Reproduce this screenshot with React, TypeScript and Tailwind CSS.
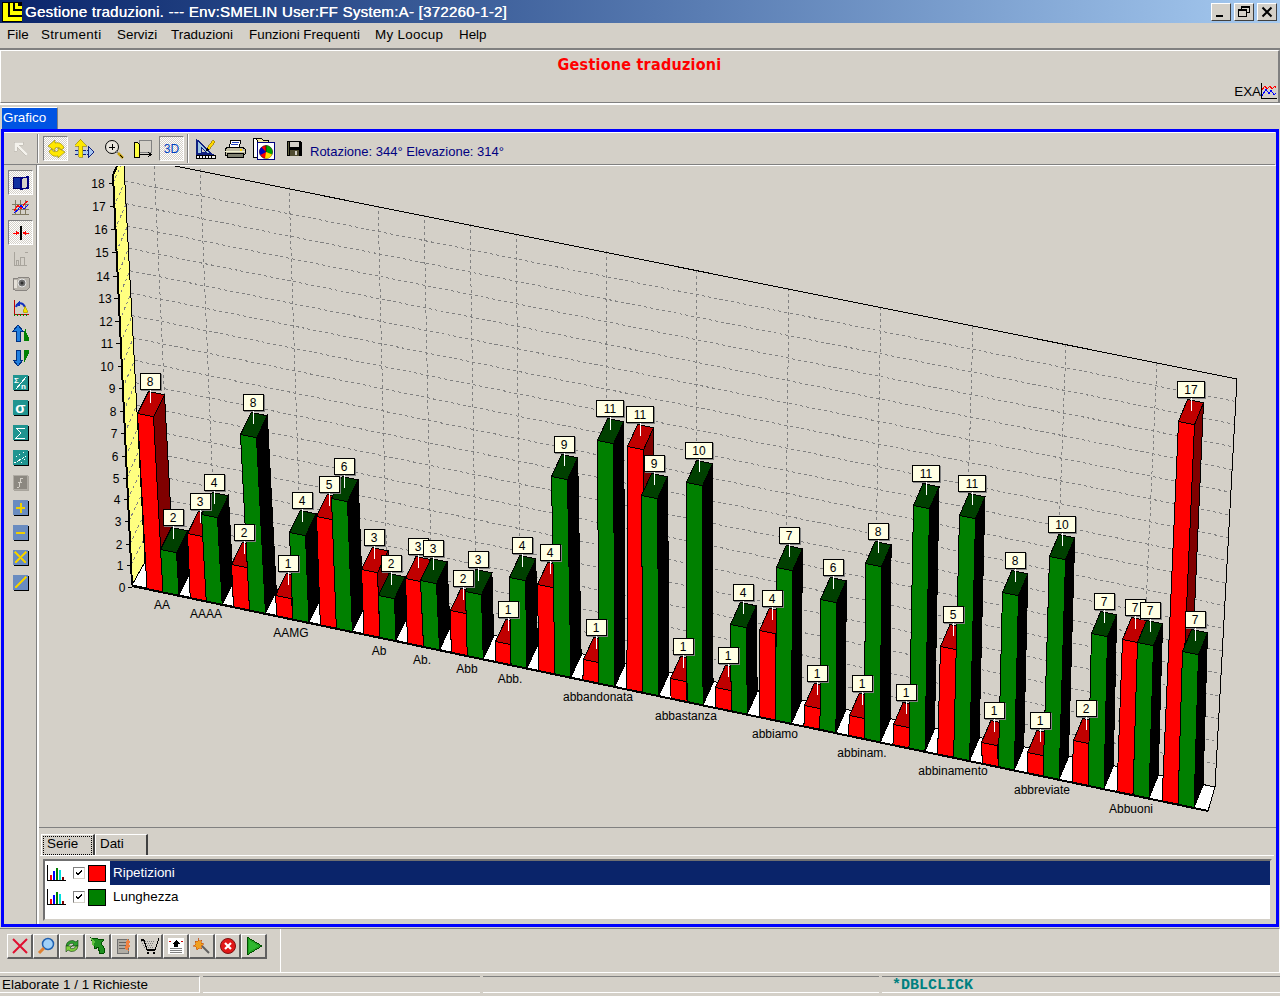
import React from "react";

const DATA: [number, number][] = [[8,2],[3,4],[2,8],[1,4],[5,6],[3,2],[3,3],[2,3],[1,4],[4,9],[1,11],[11,9],[1,10],[1,4],[4,7],[1,6],[1,8],[1,11],[5,11],[1,8],[1,10],[2,7],[7,7],[17,7]];
const POS: number[][] = [[150,381,173,517],[200,501,214,482],[244,532,253,402],[288,563,302,500],[329,484,344,466],[374,537,391,563],[418,546,433,548],[463,578,478,559],[508,609,522,545],[550,552,564,444],[596,627,610,408],[640,414,654,463],[683,646,699,450],[728,655,743,592],[772,598,789,535],[817,673,833,567],[862,683,878,531],[906,692,926,473],[953,614,972,483],[994,710,1015,560],[1040,720,1062,524],[1086,708,1104,601],[1135,607,1150,610],[1191,389,1195,619]];
const YTICKS: [string, number, number][] = [["18",98,183],["17",99,206],["16",101,229],["15",102,252],["14",103,276],["13",105,298],["12",106,321],["11",107,343],["10",107,366],["9",112,388],["8",113,411],["7",114,433],["6",115,456],["5",116,478],["4",117,499],["3",118,521],["2",119,544],["1",120,565],["0",122,587]];
const CATS: [string, number, number][] = [["AA",162,604],["AAAA",206,613],["AAMG",291,632],["Ab",379,650],["Ab.",422,659],["Abb",467,668],["Abb.",510,678],["abbandonata",598,696],["abbastanza",686,715],["abbiamo",775,733],["abbinam.",862,752],["abbinamento",953,770],["abbreviate",1042,789],["Abbuoni",1131,808]];
const VGRID = [154,200,289,378,424,470,516,606,697,789,881,973,1066,1157];

const pts = (a: number[][]) => a.map((p) => p.join(",")).join(" ");

function Bar({ i, s, lx, ly }: { i: number; s: number; lx: number; ly: number }) {
  const bx = 147 + 43.17 * i + 0.0418 * i * i + (s ? 16 : 0);
  const by = 585.5 + 0.209 * (bx - 132);
  const tx = lx - 12.5;
  const ty = ly + 32.5;
  const dx = 11 - (2 * i) / 23;
  const dy = -22;
  const w = 16;
  const h = 3.3;
  const front = s ? "#008000" : "#ff0000";
  const top = s ? "#004000" : "#c00000";
  const side = s ? "#000000" : "#800000";
  return (
    <g stroke="#000" strokeWidth={1}>
      <polygon fill={side} points={pts([[tx + w, ty + h], [tx + w + dx, ty + h + dy], [bx + w + dx, by + h + dy], [bx + w, by + h]])} />
      <polygon fill={top} points={pts([[tx, ty], [tx + w, ty + h], [tx + w + dx, ty + h + dy], [tx + dx, ty + dy]])} />
      <polygon fill={front} points={pts([[tx, ty], [tx + w, ty + h], [bx + w, by + h], [bx, by]])} />
    </g>
  );
}

function ValueLabel({ v, lx, ly }: { v: number; lx: number; ly: number }) {
  const w = v >= 10 ? 28 : 21;
  const x = Math.round(lx - w / 2);
  const y = Math.round(ly - 8.5);
  return (
    <g>
      <rect x={x + 1} y={y + 1} width={w} height={17} fill="#808080" />
      <rect x={x + 0.5} y={y + 0.5} width={w - 1} height={16} fill="#ffffe4" stroke="#000" />
      <line x1={Math.round(lx) + 0.5} y1={y + 17} x2={Math.round(lx) + 0.5} y2={y + 30} stroke="#fff" />
      <text x={lx} y={y + 13} textAnchor="middle" fontSize={12} fill="#000" style={{ fontFamily: "'Liberation Sans'" }}>{v}</text>
    </g>
  );
}

function Chart() {
  const hlines = [];
  for (let v = 1; v <= 17; v++) {
    hlines.push(<line key={v} x1={145 - (v / 18) * 21} y1={562 - 22.4 * v} x2={1215 + (v / 18) * 22} y2={787 - 22.67 * v} stroke="#808080" strokeDasharray="3 3" />);
  }
  const vlines = VGRID.map((x) => {
    const yt = 379 - 0.2025 * (1237 - x);
    const L = (650 - x) * 0.00009;
    let xb = x;
    for (let k = 0; k < 3; k++) xb = x + L * (562 + 0.21 * (xb - 145) - yt);
    const yb = 562 + 0.21 * (xb - 145);
    return <line key={x} x1={x} y1={yt} x2={xb} y2={yb} stroke="#808080" strokeDasharray="3 3" />;
  });
  return (
    <svg width={1237} height={661} viewBox="39 166 1237 661" shapeRendering="crispEdges" className="block">
      {hlines}
      {vlines}
      <line x1={150} y1={161} x2={1237} y2={379} stroke="#000" />
      <line x1={1237} y1={379} x2={1215} y2={787} stroke="#000" />
      <polygon points="117,166 124,166 145,562 132,585 113,175" fill="#ffff80" />
      {YTICKS.map(([, , y], k) => {
        const v = 18 - k;
        const fx = 132 - (585 - y) * 0.0476;
        return (
          <g key={k}>
            <line x1={fx - 4} y1={y} x2={fx} y2={y} stroke="#000" />
            <line x1={fx} y1={y} x2={145 - (v / 18) * 21} y2={562 - 22.4 * v} stroke="#808080" strokeDasharray="3 3" />
          </g>
        );
      })}
      <polyline points="117,166 113,175 132,585" fill="none" stroke="#000" strokeWidth={2} />
      <line x1={124} y1={166} x2={145} y2={562} stroke="#000" />
      <polygon points="132,585 1208,811 1215,787 145,562" fill="#fff" stroke="#000" />
      <line x1={132} y1={586} x2={1208} y2={811} stroke="#000" strokeWidth={2} />
      {DATA.map((_, i) => (
        <g key={i}>
          <Bar i={i} s={0} lx={POS[i][0]} ly={POS[i][1]} />
          <Bar i={i} s={1} lx={POS[i][2]} ly={POS[i][3]} />
        </g>
      ))}
      {DATA.map(([r, g], i) => (
        <g key={i}>
          <ValueLabel v={r} lx={POS[i][0]} ly={POS[i][1]} />
          <ValueLabel v={g} lx={POS[i][2]} ly={POS[i][3]} />
        </g>
      ))}
      <g shapeRendering="auto">
        {YTICKS.map(([t, x, y]) => (
          <text key={t} x={x} y={y + 4.5} textAnchor="middle" fontSize={12} fill="#000" style={{ fontFamily: "'Liberation Sans'" }}>{t}</text>
        ))}
        {CATS.map(([t, x, y]) => (
          <text key={t} x={x} y={y + 4.5} textAnchor="middle" fontSize={12} fill="#000" style={{ fontFamily: "'Liberation Sans'" }}>{t}</text>
        ))}
      </g>
    </svg>
  );
}

type IconProps = { children: React.ReactNode; s?: number; vb?: number };
function Ico({ children, s = 20, vb = 20 }: IconProps) {
  return <svg width={s} height={s} viewBox={`0 0 ${vb} ${vb}`} shapeRendering="crispEdges" className="block">{children}</svg>;
}

function TitleLogo() {
  return (
    <svg width={20} height={20} viewBox="0 0 20 20" shapeRendering="crispEdges" className="block ml-[2px]">
      <rect width={20} height={20} fill="#000" />
      <path d="M1 1h5v14h14v4H1z" fill="#ffff00" />
      <path d="M8 1h3v8h9v4H8z" fill="#ffff00" />
      <path d="M13 1h3v3h4v3h-7z" fill="#ffff00" />
    </svg>
  );
}

function WinBtn({ children }: { children: React.ReactNode }) {
  return (
    <div className="w-[20px] h-[18px] bg-[#d4d0c8] border border-t-white border-l-white border-r-[#404040] border-b-[#404040] flex items-center justify-center">
      {children}
    </div>
  );
}

function TitleBar() {
  return (
    <div className="h-[23px] flex items-center bg-gradient-to-r from-[#0a246a] to-[#a6caf0] shrink-0">
      <TitleLogo />
      <span className="ml-[3px] text-white text-[15px] leading-[23px] font-['Liberation_Sans'] whitespace-nowrap tracking-[0.28px] [text-shadow:0.3px_0_0_#fff]">Gestione traduzioni. --- Env:SMELIN User:FF System:A- [372260-1-2]</span>
      <div className="ml-auto mr-[3px] flex gap-[3px]">
        <WinBtn>
          <svg width={12} height={12} viewBox="0 0 12 12" shapeRendering="crispEdges"><rect x={1} y={9} width={7} height={2} fill="#000" /></svg>
        </WinBtn>
        <WinBtn>
          <svg width={12} height={12} viewBox="0 0 12 12" shapeRendering="crispEdges"><path d="M3.5 3.5V.5h8v6h-3M.5 3.5h8v7h-8z M.5 4.5h8 M3.5 1.5h8" fill="none" stroke="#000" /></svg>
        </WinBtn>
        <WinBtn>
          <svg width={12} height={12} viewBox="0 0 12 12"><path d="M1.5 1.5l9 9M10.5 1.5l-9 9" stroke="#000" strokeWidth={2} /></svg>
        </WinBtn>
      </div>
    </div>
  );
}

function Menu() {
  const items: [string, string][] = [["File", "w-[19px]"], ["Strumenti", "w-[61px] tracking-[0.35px]"], ["Servizi", "w-[39px]"], ["Traduzioni", "w-[63px]"], ["Funzioni Frequenti", "w-[111px]"], ["My Loocup", "w-[69px] tracking-[0.3px]"], ["Help", "w-[26px]"]];
  return (
    <div className="h-[24px] flex items-center gap-[15px] pl-[7px] text-[13.4px] text-black shrink-0">
      {items.map(([t, w]) => <span key={t} className={`${w} whitespace-nowrap`}>{t}</span>)}
    </div>
  );
}

function ExaIcon() {
  return (
    <svg width={16} height={17} viewBox="0 0 16 17" shapeRendering="crispEdges" className="block">
      <path d="M.5 0v15.5H15.5" fill="none" stroke="#000" />
      <polyline points="1,7 4,3 6,6 9,3 11,6 14,3 15,5" fill="none" stroke="#ff0000" />
      <polyline points="1,13 5,6 8,11 10,7 13,12 15,10" fill="none" stroke="#0000ff" />
    </svg>
  );
}

function Header() {
  return (
    <div className="mt-[1px] h-[57px] border-t-2 border-t-[#808080] border-b-2 border-b-white shrink-0">
      <div className="h-[53px] border-t border-l border-t-white border-l-white border-b border-b-[#808080] border-r-2 border-r-[#808080] flex flex-col">
        <div className="text-center text-[#ff0000] font-bold text-[16px] leading-[18px] pt-[5px] h-[27px] tracking-[0.25px] [font-family:'DejaVu_Sans','Liberation_Sans',sans-serif] scale-x-[0.9]">Gestione traduzioni</div>
        <div className="flex justify-end items-end mt-[5px] pr-[1px]">
          <span className="text-[13.4px] leading-[16px] text-black">EXA</span>
          <ExaIcon />
        </div>
      </div>
    </div>
  );
}

function ArrowUL() {
  return <Ico s={18} vb={18}><path d="M2 2h9v3H7l9 9-2 2-9-9v4H2z" fill="#f4f2ec" stroke="#b8b4ac" strokeWidth={0.5} /></Ico>;
}
function Rotate() {
  return (
    <Ico>
      <g stroke="#8a7a00" strokeWidth={0.6} fill="#ffe800" shapeRendering="auto">
        <path d="M18 9C17 5 13 3 9 4L9 1 2 7l7 5 0-3C12 8 15 9 15 11z" />
        <path d="M3 12c1 4 5 6 9 5l0 2 7-6-7-4 0 3C9 13 6 13 6 10z" />
      </g>
    </Ico>
  );
}
function MoveAxes() {
  return (
    <Ico>
      <path d="M0.5 11.5h13v3h-13z" fill="#a8c8f0" />
      <path d="M0 11h14M0 15h14" stroke="#102080" strokeDasharray="3 1" />
      <path d="M13 7l6 6-6 6z" fill="#a8c8f0" stroke="#102080" />
      <path d="M5.5 0l6 7H7.5v11h-4V7H-.5z" fill="#ffe800" stroke="#8a7a00" strokeWidth={0.6} />
    </Ico>
  );
}
function ZoomPlus() {
  return (
    <Ico>
      <circle cx={8} cy={8} r={6.5} fill="#e8e4dc" stroke="#000" shapeRendering="auto" />
      <path d="M5 8h6M8 5v6" stroke="#000" />
      <path d="M12 12l2 2" stroke="#808080" strokeWidth={2} />
      <path d="M14 14l5 5" stroke="#c8a000" strokeWidth={2.5} shapeRendering="auto" />
      <path d="M16 16l3 3" stroke="#000" strokeWidth={1} />
    </Ico>
  );
}
function YellowBox() {
  return (
    <Ico>
      <rect x={6} y={1} width={12} height={12} fill="#d4d0c8" stroke="#808080" />
      <path d="M1.5 3.5h3l2 2v13h-5z" fill="#ffff40" stroke="#000" />
      <path d="M6 15.5h12M15 13l3 2.5-3 2.5" fill="none" stroke="#000" />
    </Ico>
  );
}
function Ruler() {
  return (
    <Ico s={22} vb={22}>
      <path d="M2 2l15 14H2z" fill="#a0c8e0" stroke="#102080" strokeWidth={1.4} />
      <path d="M6 9l5 5H6z" fill="#d4d0c8" stroke="#102080" />
      <path d="M1 17h19v3H1z" fill="#f0f0f0" stroke="#000" />
      <path d="M4 18v2M7 18v2M10 18v2M13 18v2M16 18v2" stroke="#000" />
      <path d="M12 10l6-8 2 2-6 8z" fill="#ffd800" stroke="#806000" strokeWidth={0.6} />
      <path d="M12 10l-1 3 3-1z" fill="#000" />
    </Ico>
  );
}
function Printer() {
  return (
    <Ico s={22} vb={22}>
      <path d="M7 2h10l-2 8H5z" fill="#fff" stroke="#000" />
      <path d="M8 4h7M7 6h7" stroke="#2040c0" />
      <path d="M1 11l3-2h14l3 2v5l-2 2H3l-2-1z" fill="#c0bca4" stroke="#000" />
      <path d="M1 13h20" stroke="#f0f0d0" />
      <rect x={3} y={15} width={16} height={4} fill="#808070" stroke="#000" />
      <path d="M16 12h2" stroke="#ffd000" strokeWidth={2} />
    </Ico>
  );
}
function PieDoc() {
  return (
    <svg width={22} height={24} viewBox="0 0 22 24" className="block" shapeRendering="crispEdges">
      <path d="M0.5 1.5h4v19h-4z" fill="#fff" stroke="#000" />
      <path d="M3.5 1.5h5l2 2h5v3h-10z" fill="#f0e8a0" stroke="#000" />
      <rect x={4.5} y={5.5} width={17} height={17} fill="#fff" stroke="#000080" />
      <g shapeRendering="auto">
        <circle cx={13} cy={15} r={6.5} fill="#ff0000" stroke="#000" strokeWidth={0.6} />
        <path d="M13 15V8.5a6.5 6.5 0 0 1 6 9z" fill="#00a000" />
        <path d="M13 15L7.5 18a6.5 6.5 0 0 1 1-8z" fill="#0000c0" />
        <path d="M13 15l6 2.5a6.5 6.5 0 0 1-7 4z" fill="#ffe000" />
        <path d="M13 15V8.5" stroke="#000" strokeWidth={0.6} />
      </g>
    </svg>
  );
}
function Floppy() {
  return (
    <Ico s={15} vb={15}>
      <path d="M0 0h13l2 2v13H0z" fill="#000" />
      <rect x={3} y={1} width={9} height={5} fill="#d4d0c8" />
      <rect x={3} y={9} width={9} height={6} fill="#504c30" />
      <rect x={8} y={10} width={2} height={4} fill="#d4d0c8" />
      <rect x={1} y={1} width={1} height={13} fill="#606040" />
    </Ico>
  );
}

const DITHER = "bg-[repeating-conic-gradient(#ffffff_0_25%,#d4d0c8_0_50%)] bg-[length:2px_2px]";

function Pressed({ children }: { children: React.ReactNode }) {
  return (
    <div className={`w-[25px] h-[25px] border border-t-[#808080] border-l-[#808080] border-r-white border-b-white flex items-center justify-center ${DITHER}`}>
      {children}
    </div>
  );
}
function Plain({ children }: { children: React.ReactNode }) {
  return <div className="w-[25px] h-[25px] flex items-center justify-center">{children}</div>;
}
function Sep() {
  return <div className="w-[2px] h-[29px] border-l border-l-[#808080] border-r border-r-white" />;
}

function TopToolbar() {
  return (
    <div className="h-[33px] border-t border-t-white border-b border-b-[#808080] flex items-center shrink-0 mr-[1px]">
      <div className="w-[33px] flex justify-center pl-[1px]"><ArrowUL /></div>
      <Sep />
      <div className="ml-[4px] flex gap-[4px]">
        <Pressed><Rotate /></Pressed>
        <Plain><MoveAxes /></Plain>
        <Plain><ZoomPlus /></Plain>
        <Plain><YellowBox /></Plain>
        <Pressed><span className="text-[12px] text-[#0040c0] leading-none">3D</span></Pressed>
      </div>
      <div className="ml-[3px]"><Sep /></div>
      <div className="ml-[4px] flex gap-[4px]">
        <Plain><Ruler /></Plain>
        <Plain><Printer /></Plain>
        <Plain><PieDoc /></Plain>
        <div className="ml-[2px]"><Plain><Floppy /></Plain></div>
      </div>
      <span className="ml-[3px] mt-[7px] text-[13px] text-[#000080] whitespace-nowrap">Rotazione: 344° Elevazione: 314°</span>
    </div>
  );
}

function Tile({ c, children, dim }: { c: string; children: React.ReactNode; dim?: boolean }) {
  return (
    <svg width={16} height={16} viewBox="0 0 16 16" shapeRendering="crispEdges" className="block">
      <rect x={1} y={1} width={15} height={15} fill={dim ? "#a8a49c" : "#000"} />
      <rect x={0} y={0} width={15} height={15} fill={c} />
      {children}
    </svg>
  );
}
const W = "#ffffff";
const Y = "#f0d000";
function LeftIcon({ n }: { n: number }) {
  switch (n) {
    case 0:
      return <Ico s={18} vb={18}><path d="M1 3l7 1v11l-7-1z" fill="#1030a0" stroke="#000060" /><path d="M9 4l7-1v11l-7 1z" fill="#d4d0c8" stroke="#000080" strokeWidth={1.6} /></Ico>;
    case 1:
      return <Ico s={18} vb={18}><path d="M3 1v15M0 15h17M0 5h17M0 10h17M8 1v15M13 1v15" stroke="#807860" /><polyline points="2,12 6,6 9,10 13,4 16,2" fill="none" stroke="#ff0000" /><polyline points="2,14 6,11 9,6 12,10 16,6" fill="none" stroke="#0000ff" /></Ico>;
    case 2:
      return <Ico s={18} vb={18}><path d="M9 2v14" stroke="#000" strokeWidth={1.5} /><path d="M1 9h6M11 9h6" stroke="#ff0000" /><path d="M4 7l4 2-4 2zM14 7l-4 2 4 2z" fill="#ff0000" /></Ico>;
    case 3:
      return <Ico s={18} vb={18}><path d="M2 3v13h13M13 3h3M8 8h4v8H8zM4 11h2v5H4z" fill="none" stroke="#a8a49c" /></Ico>;
    case 4:
      return <Ico s={18} vb={18}><path d="M1 5l2-1h3l1-1h8l2 1v10l-2 2H3l-2-1z" fill="#b8b4ac" stroke="#888480" /><circle cx={10} cy={9} r={4} fill="#707070" stroke="#e8e8e8" shapeRendering="auto" /><rect x={2} y={6} width={3} height={8} fill="#e4e0d8" /><circle cx={10} cy={9} r={1.5} fill="#303030" shapeRendering="auto" /></Ico>;
    case 5:
      return <Ico s={18} vb={18}><path d="M2 1v14h15" fill="none" stroke="#c00000" /><path d="M2 16h15" stroke="#008000" strokeDasharray="1 2" strokeWidth={2} /><path d="M4 8c1-4 6-6 9 0" fill="none" stroke="#1030c0" strokeWidth={2} shapeRendering="auto" /><path d="M8 1v6l-5-1z" fill="#1030c0" /><path d="M13 7l3 6-3 1-2-1z" fill="#f0e000" stroke="#908000" strokeWidth={0.5} /></Ico>;
    case 6:
      return <Ico s={18} vb={18}><path d="M6 1l5 6H8v10H4V7H1z" fill="#2080e0" stroke="#003080" /><path d="M12 8h2M12 10h3M12 12h4M12 14h5M12 16h5M13 6h1" stroke="#008000" strokeWidth={1.5} /></Ico>;
    case 7:
      return <Ico s={18} vb={18}><path d="M6 17l5-6H8V1H4v10H1z" fill="#2080e0" stroke="#003080" /><path d="M12 2h5M12 4h5M12 6h4M12 8h3M12 10h2M12 12h1" stroke="#008000" strokeWidth={1.5} /></Ico>;
    case 8:
      return <Tile c="#1f9490"><text x={1} y={8} fontSize={8} fill={W} fontWeight={700} style={{ fontFamily: "'Liberation Sans'" }}>Σ</text><path d="M13 2L3 14" stroke={W} /><text x={8} y={14} fontSize={8} fill={W} fontWeight={700} style={{ fontFamily: "'Liberation Sans'" }}>n</text></Tile>;
    case 9:
      return <Tile c="#1f9490"><text x={7.5} y={13} fontSize={15} textAnchor="middle" fill={W} fontWeight={700} style={{ fontFamily: "'Liberation Sans'" }}>σ</text></Tile>;
    case 10:
      return <Tile c="#1f9490"><path d="M12 3H3l5 5-5 5h9" fill="none" stroke={W} /></Tile>;
    case 11:
      return <Tile c="#1f9490"><path d="M1 13l13-7" stroke={W} strokeDasharray="2 1" /><path d="M3 6h1M6 4h1M10 2h1M5 10h1M11 9h1M8 12h1" stroke={W} /></Tile>;
    case 12:
      return <Tile c="#8c8880" dim><rect x={0.5} y={0.5} width={14} height={14} fill="#8c8880" stroke="#b0aca4" /><path d="M10 3H8L6 12H4M5 7h4" fill="none" stroke="#d4d0c8" /></Tile>;
    case 13:
      return <Tile c="#6a8cc0"><path d="M3 7h9v2H3zM6.5 3h2v10h-2z" fill={Y} /></Tile>;
    case 14:
      return <Tile c="#6a8cc0"><path d="M3 6.5h9v2H3z" fill={Y} /></Tile>;
    case 15:
      return <Tile c="#6a8cc0"><path d="M2 2l11 11M13 2L2 13" stroke={Y} strokeWidth={1.5} /></Tile>;
    default:
      return <Tile c="#6a8cc0"><path d="M2 13L13 2" stroke={Y} strokeWidth={1.5} /></Tile>;
  }
}

function LeftToolbar() {
  const idx = Array.from({ length: 17 }, (_, i) => i);
  return (
    <div className="w-[33px] border-r border-r-[#808080] pt-[5px] pl-[4px] flex flex-col shrink-0">
      {idx.map((n) =>
        n === 0 || n === 2 ? (
          <Pressed key={n}><LeftIcon n={n} /></Pressed>
        ) : (
          <Plain key={n}><LeftIcon n={n} /></Plain>
        )
      )}
    </div>
  );
}

function MiniBars() {
  return (
    <svg width={19} height={17} viewBox="0 0 19 17" shapeRendering="crispEdges" className="block">
      <path d="M.5 0v15.5H18.5" fill="none" stroke="#000" />
      <rect x={3} y={10} width={2} height={5} fill="#ff0000" />
      <rect x={6} y={6} width={2} height={9} fill="#0000ff" />
      <rect x={9} y={3} width={2} height={12} fill="#008000" />
      <rect x={12} y={5} width={2} height={10} fill="#00e0e0" />
      <rect x={15} y={12} width={2} height={3} fill="#800000" />
    </svg>
  );
}

function Check() {
  return (
    <div className="w-[12px] h-[12px] bg-white border border-t-[#808080] border-l-[#808080] border-r-[#d4d0c8] border-b-[#d4d0c8] flex items-center justify-center">
      <svg width={10} height={10} viewBox="0 0 10 10" shapeRendering="crispEdges"><path d="M2 4l2 2 4-4M2 5l2 2 4-4" fill="none" stroke="#000" strokeWidth={1.2} /></svg>
    </div>
  );
}

function SeriesRow({ color, name, sel }: { color: string; name: string; sel?: boolean }) {
  return (
    <div className="h-[24px] flex items-center">
      <div className="w-[65px] flex items-center pl-[2px]">
        <MiniBars />
        <div className="ml-[7px]"><Check /></div>
        <div className="ml-[3px] w-[18px] h-[17px] border border-black" style={{ backgroundColor: color }} />
      </div>
      <div className={`flex-1 h-[24px] flex items-center pl-[3px] text-[13.4px] leading-none ${sel ? "bg-[#0a246a] text-white" : "text-black"}`}>{name}</div>
    </div>
  );
}

function BottomPanel() {
  return (
    <div className="h-[97px] border-t border-t-[#808080] shrink-0 pl-[1px] pr-[2px]">
      <div className="flex items-end h-[27px] pt-[5px] pl-[1px]">
        <div className="w-[54px] h-[21px] bg-[#d4d0c8] border-t border-l border-t-white border-l-white border-r-2 border-r-[#404040] p-[1px] mt-[-1px]">
          <div className="border border-dotted border-black h-[19px] leading-[13px] text-[13.4px] pl-[3px]">Serie</div>
        </div>
        <div className="w-[53px] h-[21px] border-t border-l border-t-white border-l-white border-r-2 border-r-[#404040] text-[13.4px] leading-[18px] pl-[4px]">Dati</div>
      </div>
      <div className="border-t border-t-white h-[68px] pt-[3px] pl-[3px] pr-[2px]">
        <div className="h-[62px] bg-white border-t-2 border-l-2 border-t-[#707070] border-l-[#707070] border-b-2 border-r-2 border-b-[#d4d0c8] border-r-[#d4d0c8]">
          <SeriesRow color="#ff0000" name="Ripetizioni" sel />
          <SeriesRow color="#008000" name="Lunghezza" />
        </div>
      </div>
    </div>
  );
}

function Frame() {
  return (
    <div className="mx-[1px] h-[798px] border-[3px] border-[#0000ff] flex flex-col shrink-0">
      <TopToolbar />
      <div className="flex flex-1 min-h-0">
        <LeftToolbar />
        <div className="flex-1 min-w-0 flex flex-col border-l-2 border-l-white">
          <div className="h-[662px] border-t border-t-white overflow-hidden shrink-0"><Chart /></div>
          <BottomPanel />
        </div>
      </div>
    </div>
  );
}

function BtnIcon({ n }: { n: number }) {
  switch (n) {
    case 0:
      return <Ico s={18} vb={18}><path d="M2 2l14 14M16 2L2 16" stroke="#e01030" strokeWidth={2} shapeRendering="auto" /></Ico>;
    case 1:
      return <Ico s={18} vb={18}><g shapeRendering="auto"><circle cx={11} cy={7} r={5.5} fill="#a0d0f8" stroke="#2060b0" strokeWidth={1.5} /><path d="M7 11l-5 5" stroke="#e08030" strokeWidth={3} /></g></Ico>;
    case 2:
      return <Ico s={18} vb={18}><g shapeRendering="auto"><path d="M3 9a6 6 0 0 1 10-4l2-2v6h-6l2-2a4 4 0 0 0-6 2z" fill="#30a030" stroke="#104010" strokeWidth={0.6} /><path d="M15 9a6 6 0 0 1-10 4l-2 2V9h6l-2 2a4 4 0 0 0 6-2z" fill="#80d040" stroke="#104010" strokeWidth={0.6} /></g></Ico>;
    case 3:
      return <Ico s={18} vb={18}><path d="M2 1l13 2-3 3 3 5v5l-4 1-2-7-3 2z" fill="#209020" stroke="#005000" /><path d="M2 1l4 4-2 5z" fill="#60c040" /></Ico>;
    case 4:
      return <Ico s={18} vb={18}><rect x={2} y={2} width={11} height={14} fill="#b0aca4" stroke="#707070" /><path d="M4 5h7M4 8h7M4 11h7" stroke="#686460" /><path d="M12 2l3 3-2 2 3 2-3 2 1 3-4-2z" fill="#f08040" /></Ico>;
    case 5:
      return <Ico s={20} vb={20}><path d="M1 5h13M2 7h11M3 9h10M4 11h9" stroke="#808080" strokeDasharray="1 1" /><path d="M1 4h3l3 10h8l4-12" fill="none" stroke="#000" strokeWidth={1.2} /><circle cx={8} cy={17} r={1.5} fill="#000" /><circle cx={14} cy={17} r={1.5} fill="#000" /></Ico>;
    case 6:
      return <Ico s={18} vb={18}><rect x={1} y={1} width={16} height={16} fill="#fff" /><path d="M9 3l4 4h-2v3H7V7H5z" fill="#000" /><path d="M2 4h2M14 4h2" stroke="#d00000" /><path d="M3 11h12M3 13h12M3 15h12" stroke="#808080" /></Ico>;
    case 7:
      return <Ico s={18} vb={18}><path d="M9 9l7 7" stroke="#606060" strokeWidth={2} shapeRendering="auto" /><path d="M5 1l1 3 3-1-1 3 3 1-3 2 1 3-3-1-2 2-1-3-3-1 3-2-1-3 3 0z" fill="#f0a020" stroke="#c04000" strokeWidth={0.5} /></Ico>;
    case 8:
      return <Ico s={18} vb={18}><g shapeRendering="auto"><circle cx={9} cy={9} r={7.5} fill="#e01818" stroke="#801010" /><path d="M6 6l6 6M12 6l-6 6" stroke="#fff" strokeWidth={2.2} /></g></Ico>;
    default:
      return <Ico s={20} vb={20}><path d="M3 1l15 9-15 9z" fill="#20a020" stroke="#005000" /><path d="M5 4v12l10-6z" fill="#30b830" /></Ico>;
  }
}

function BottomToolbar() {
  const ns = [0,1,2,3,4,5,6,7,8,9];
  return (
    <div className="h-[45px] mt-[1px] border-t border-t-[#808080] border-b border-b-white border-r border-r-white flex shrink-0">
      <div className="w-[281px] border-r border-r-white flex items-start pt-[5px] pl-[7px]">
        {ns.map((n) => (
          <div key={n} className="w-[26px] h-[25px] border-t border-l border-t-white border-l-white border-r-2 border-b-2 border-r-[#606060] border-b-[#606060] flex items-center justify-center">
            <BtnIcon n={n} />
          </div>
        ))}
      </div>
    </div>
  );
}

function Pane({ w, children, grow }: { w?: string; children?: React.ReactNode; grow?: boolean }) {
  return (
    <div className={`${w ?? ""} ${grow ? "flex-1" : ""} h-[17px] border-t border-t-[#808080] border-b border-b-white flex items-center`}>
      {children}
    </div>
  );
}

function StatusBar() {
  return (
    <div className="h-[20px] mt-[2px] pt-[1px] flex gap-[3px] shrink-0">
      <div className="w-[200px] h-[17px] border-t border-t-[#808080] border-b border-b-white border-r border-r-white text-[13.4px] leading-[15px] pl-[2px]">Elaborate 1 / 1 Richieste</div>
      <Pane w="w-[277px]" />
      <Pane w="w-[396px]" />
      <Pane grow>
        <span className="pl-[10px] pt-[2px] text-[#008080] text-[15px] font-bold font-['Liberation_Mono'] leading-none">*DBLCLICK</span>
      </Pane>
    </div>
  );
}

export default function App() {
  return (
    <div className="w-[1280px] h-[996px] flex flex-col bg-[#d4d0c8] text-black font-['Liberation_Sans',Arial,sans-serif] overflow-hidden">
      <TitleBar />
      <Menu />
      <Header />
      <div className="h-[24px] pt-[2px] pl-[2px] shrink-0">
        <div className="w-[56px] h-[22px] bg-[#0054e3] text-white text-[13.4px] leading-[20px] pl-[1px] border-r border-r-[#808080] border-t border-t-white">Grafico</div>
      </div>
      <Frame />
      <BottomToolbar />
      <StatusBar />
    </div>
  );
}
